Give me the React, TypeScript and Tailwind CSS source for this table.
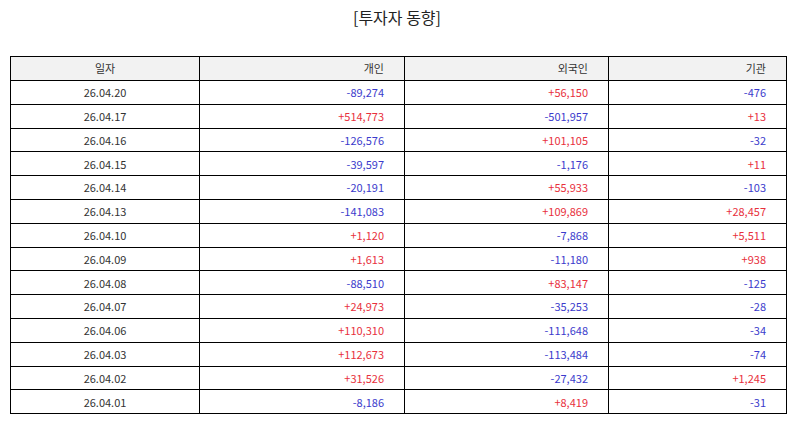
import React from "react";

type Row = [string, string, string, string];

const rows: Row[] = [
  ["26.04.20", "-89,274", "+56,150", "-476"],
  ["26.04.17", "+514,773", "-501,957", "+13"],
  ["26.04.16", "-126,576", "+101,105", "-32"],
  ["26.04.15", "-39,597", "-1,176", "+11"],
  ["26.04.14", "-20,191", "+55,933", "-103"],
  ["26.04.13", "-141,083", "+109,869", "+28,457"],
  ["26.04.10", "+1,120", "-7,868", "+5,511"],
  ["26.04.09", "+1,613", "-11,180", "+938"],
  ["26.04.08", "-88,510", "+83,147", "-125"],
  ["26.04.07", "+24,973", "-35,253", "-28"],
  ["26.04.06", "+110,310", "-111,648", "-34"],
  ["26.04.03", "+112,673", "-113,484", "-74"],
  ["26.04.02", "+31,526", "-27,432", "+1,245"],
  ["26.04.01", "-8,186", "+8,419", "-31"],
];

function Num({ v }: { v: string }) {
  const cls = v.startsWith("+") ? "text-[#e8303c]" : "text-[#3b3bcc]";
  return (
    <td className={`border border-black text-right pr-[20px] ${cls}`}>{v}</td>
  );
}

export default function App() {
  return (
    <div
      className="w-[794px] h-[425px] bg-white overflow-hidden"
      style={{ fontFamily: '"Noto Sans CJK KR", "Noto Sans", sans-serif' }}
    >
      <h1 className="text-center text-[16px] leading-[20px] text-[#222] pt-[7px] h-[56px]">
        [투자자 동향]
      </h1>
      <table className="ml-[10px] w-[776px] border-collapse table-fixed text-[11px] text-[#333]">
        <colgroup>
          <col className="w-[189px]" />
          <col className="w-[205px]" />
          <col className="w-[204px]" />
          <col className="w-[178px]" />
        </colgroup>
        <thead>
          <tr className="h-[24px] bg-[#f2f2f2]">
            <th className="border border-black font-normal text-center">일자</th>
            <th className="border border-black font-normal text-right pr-[20px]">개인</th>
            <th className="border border-black font-normal text-right pr-[20px]">외국인</th>
            <th className="border border-black font-normal text-right pr-[20px]">기관</th>
          </tr>
        </thead>
        <tbody>
          {rows.map((r) => (
            <tr key={r[0]} className="h-[23.8px]">
              <td className="border border-black text-center">{r[0]}</td>
              <Num v={r[1]} />
              <Num v={r[2]} />
              <Num v={r[3]} />
            </tr>
          ))}
        </tbody>
      </table>
    </div>
  );
}
